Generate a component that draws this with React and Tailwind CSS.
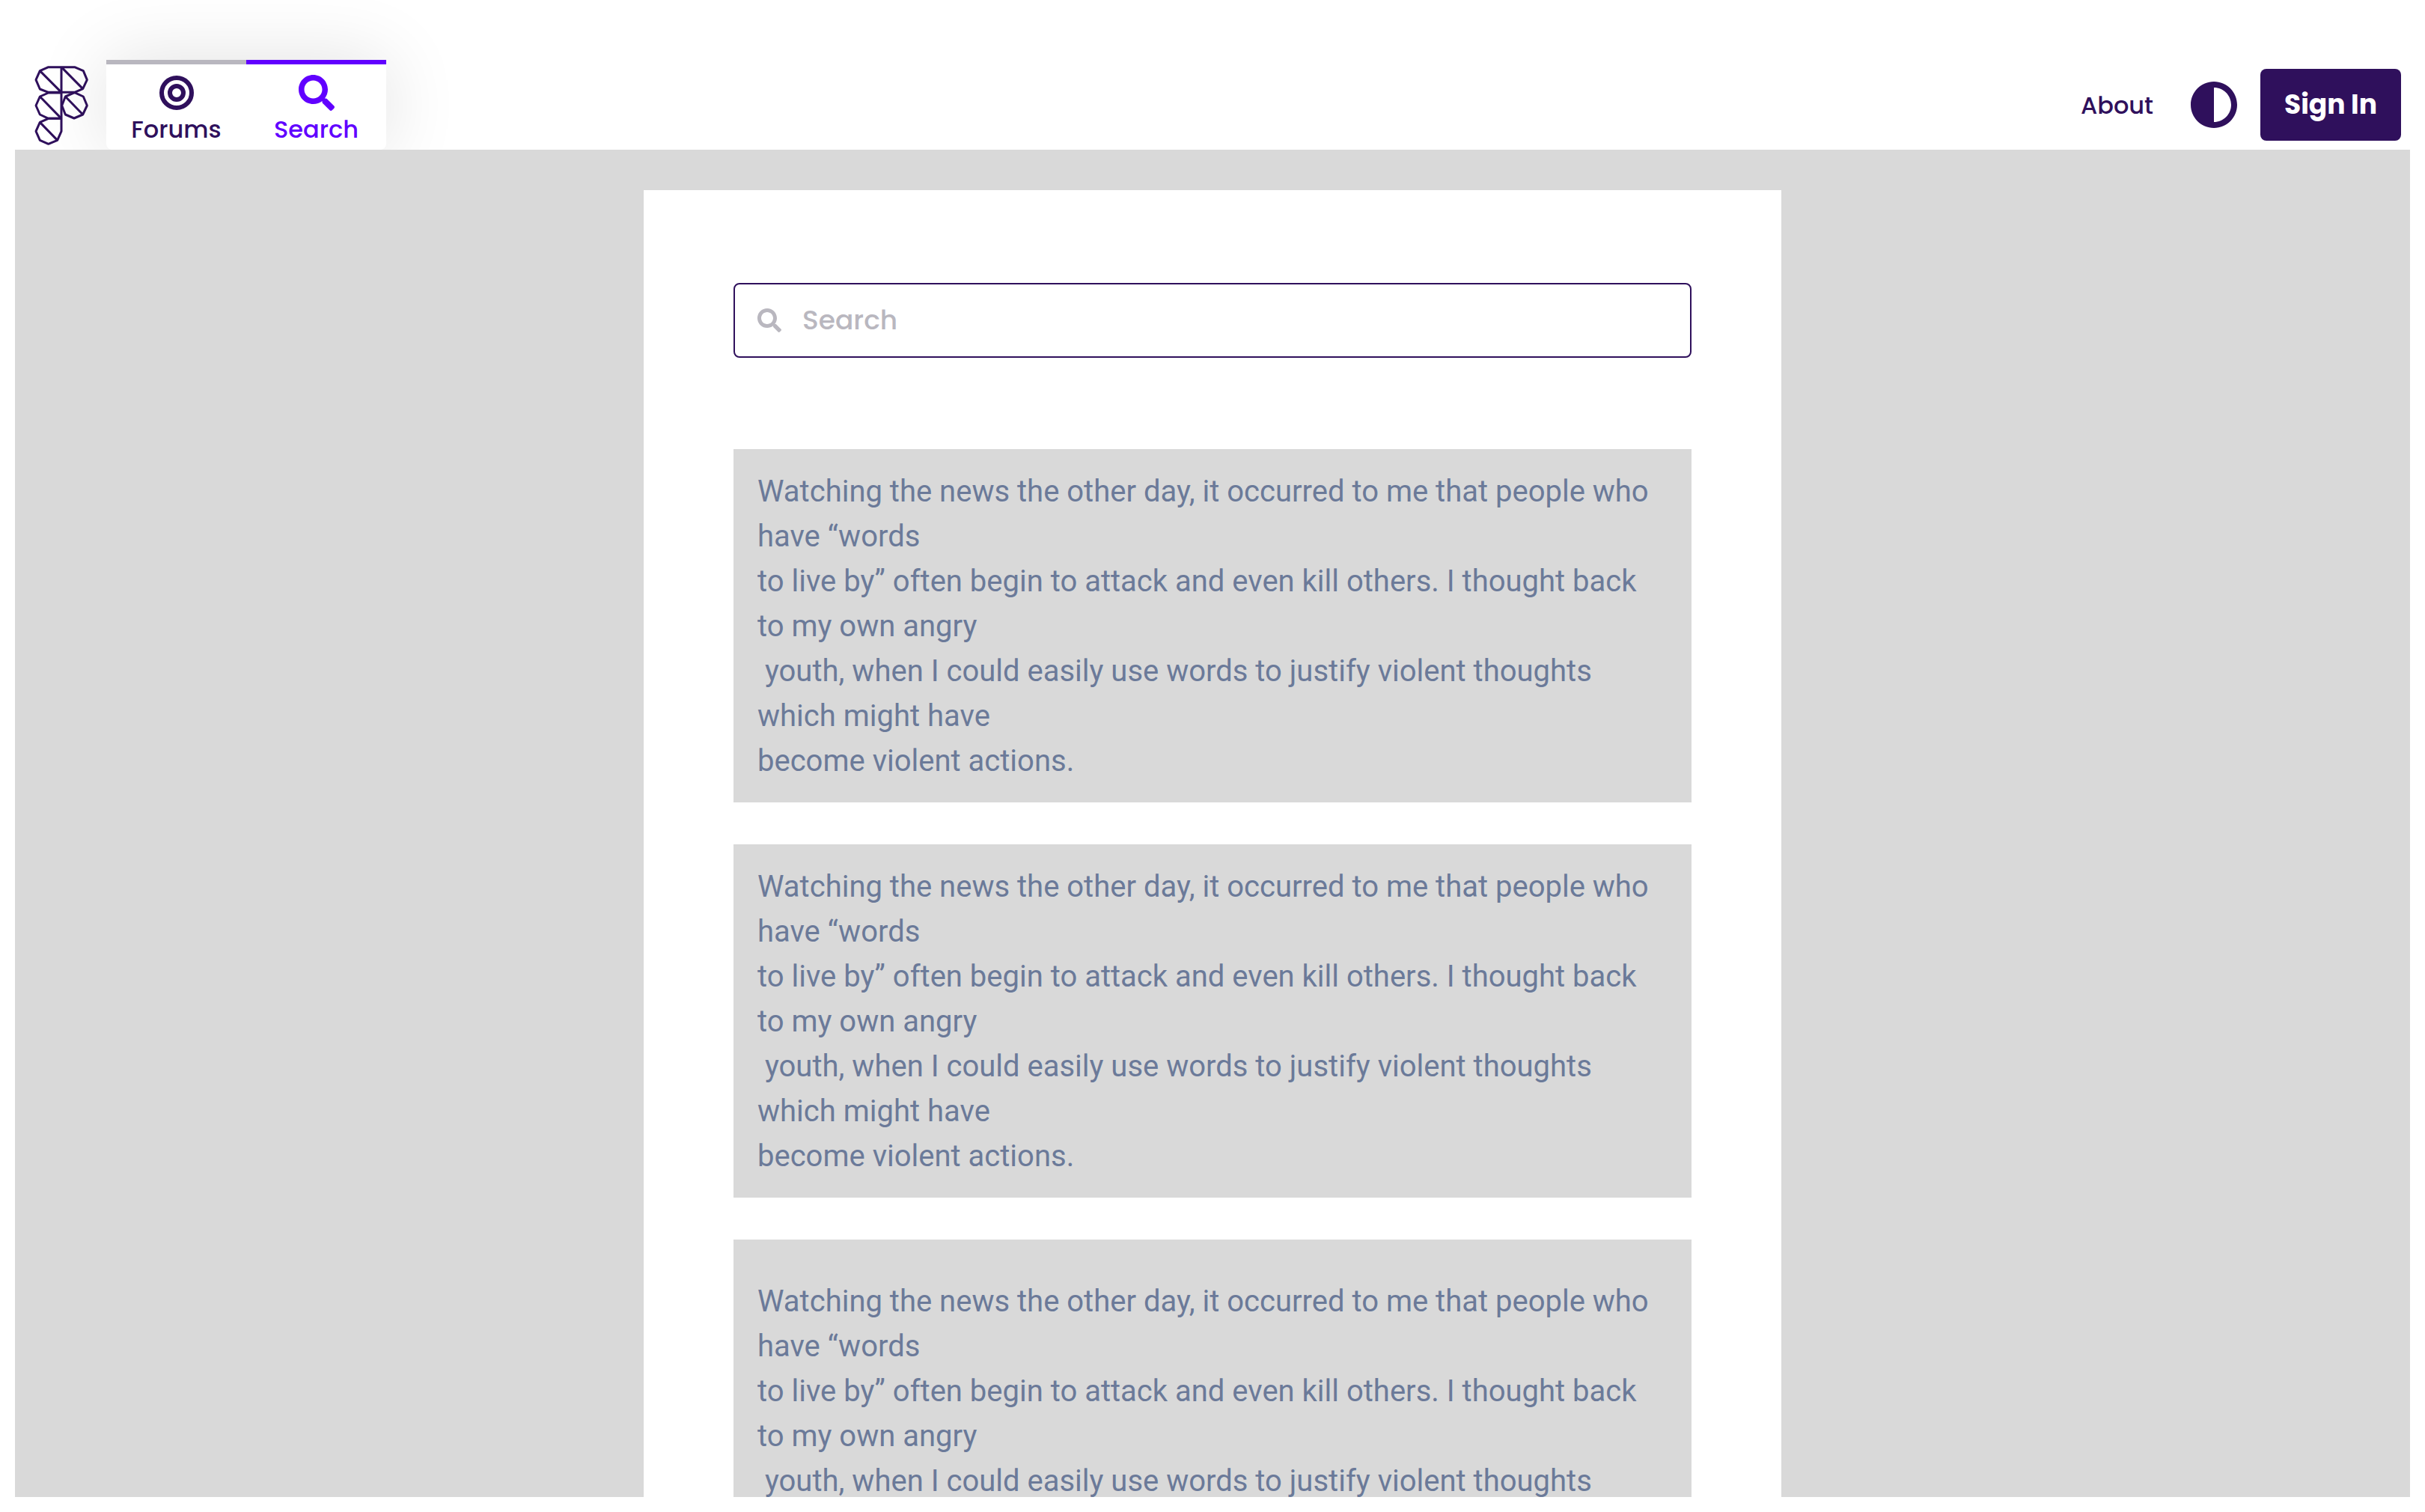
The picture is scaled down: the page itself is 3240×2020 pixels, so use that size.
import { FaSearch, FaAdjust } from "react-icons/fa";

const PASSAGE = [
  "Watching the news the other day, it occurred to me that people who have “words",
  "to live by” often begin to attack and even kill others. I thought back to my own angry",
  " youth, when I could easily use words to justify violent thoughts which might have",
  "become violent actions.",
].join("\n");

const RESULTS = [
  { id: 1, text: PASSAGE },
  { id: 2, text: PASSAGE },
  { id: 3, text: PASSAGE, roomy: true },
];

function Logo() {
  return (
    <svg
      viewBox="48 24 216 318"
      className="h-[106px] w-[72px]"
      fill="none"
      stroke="currentColor"
      strokeWidth="9"
      strokeLinejoin="bevel"
      role="img"
      aria-label="Home"
    >
      <path d="M156 29H104L70 44L54 80L70 117L104 130H156M70 44L156 130" />
      <path d="M156 29H209L244 44L259 80L242 116L209 130H156M156 29L242 116" />
      <path d="M156 132H104L70 147L54 183L70 219L104 235H156M70 147L156 235" />
      <path d="M209 131L244 147L259 183L242 219L207 234L172 219L158 183L172 147ZM172 147L242 219" />
      <path d="M156 29V286L140 322L104 337L70 322L54 286L70 250L104 235H156M70 250L140 322" />
    </svg>
  );
}

function TargetIcon() {
  return (
    <svg viewBox="0 0 48 48" className="size-12" fill="none" stroke="currentColor" strokeWidth="6" aria-hidden="true">
      <circle cx="24" cy="24" r="20" />
      <circle cx="24" cy="24" r="9" />
    </svg>
  );
}

function Tab({ label, icon, active }) {
  return (
    <a
      href={"#" + label.toLowerCase()}
      aria-current={active ? "page" : undefined}
      className={
        active
          ? "flex flex-col items-center border-t-6 border-[#6100ff] px-8 pt-3.5 text-[#6100ff]"
          : "flex flex-col items-center border-t-6 border-[#b9b7bf] px-8 pt-3.5 text-[#2f105c]"
      }
    >
      {icon}
      <span className="min-w-[123px] text-center text-[32px]/[50px] font-medium">{label}</span>
    </a>
  );
}

export default function App() {
  return (
    <div className="flex h-screen flex-col bg-white p-5 font-['Poppins','Inter',sans-serif] text-[#2f105c]">
      <header className="flex h-45 shrink-0 items-end justify-between pr-3 pl-[26px]">
        <div className="flex items-end gap-6">
          <a href="#home" className="pb-1.5">
            <Logo />
          </a>
          <nav className="flex h-30 rounded-b-lg bg-white shadow-[0_0_100px_rgba(0,0,0,0.12)]">
            <Tab label="Forums" icon={<TargetIcon />} />
            <Tab label="Search" icon={<FaSearch className="size-12" aria-hidden="true" />} active />
          </nav>
        </div>
        <div className="flex items-center pb-3">
          <a href="#about" className="mr-[49px] pt-0.5 text-[32px]/12 font-medium">About</a>
          <button type="button" aria-label="Toggle contrast" className="mr-[30px]">
            <FaAdjust className="size-16" />
          </button>
          <button type="button" className="h-24 rounded-lg bg-[#2f105c] px-8 text-[36px]/12 font-bold text-white">
            Sign In
          </button>
        </div>
      </header>

      <main className="relative flex min-h-0 flex-1 justify-center overflow-hidden bg-[#d9d9d9] pt-[54px]">
        <div className="h-max w-full max-w-[1520px] bg-white px-30 pt-31 pb-30">
          <label className="flex h-25 items-center gap-7 rounded-lg border-2 border-[#2f105c] bg-white px-[30px]">
            <FaSearch className="size-8 text-[#b9b7bf]" aria-hidden="true" />
            <input
              type="search"
              aria-label="Search"
              placeholder="Search"
              className="min-w-0 flex-1 bg-transparent text-[36px]/12 font-medium outline-none placeholder:text-[#b9b7bf]"
            />
          </label>

          <div className="mt-[122px] flex flex-col gap-14">
            {RESULTS.map((result) => (
              <article
                key={result.id}
                className={result.roomy ? "bg-[#d9d9d9] px-8 pt-[53px] pb-[51px]" : "bg-[#d9d9d9] px-8 pt-[27px] pb-[25px]"}
              >
                <p className="font-['Roboto',sans-serif] text-[40px]/[60px] whitespace-pre-wrap text-[#6b7a99]">
                  {result.text}
                </p>
              </article>
            ))}
          </div>
        </div>
      </main>
    </div>
  );
}
